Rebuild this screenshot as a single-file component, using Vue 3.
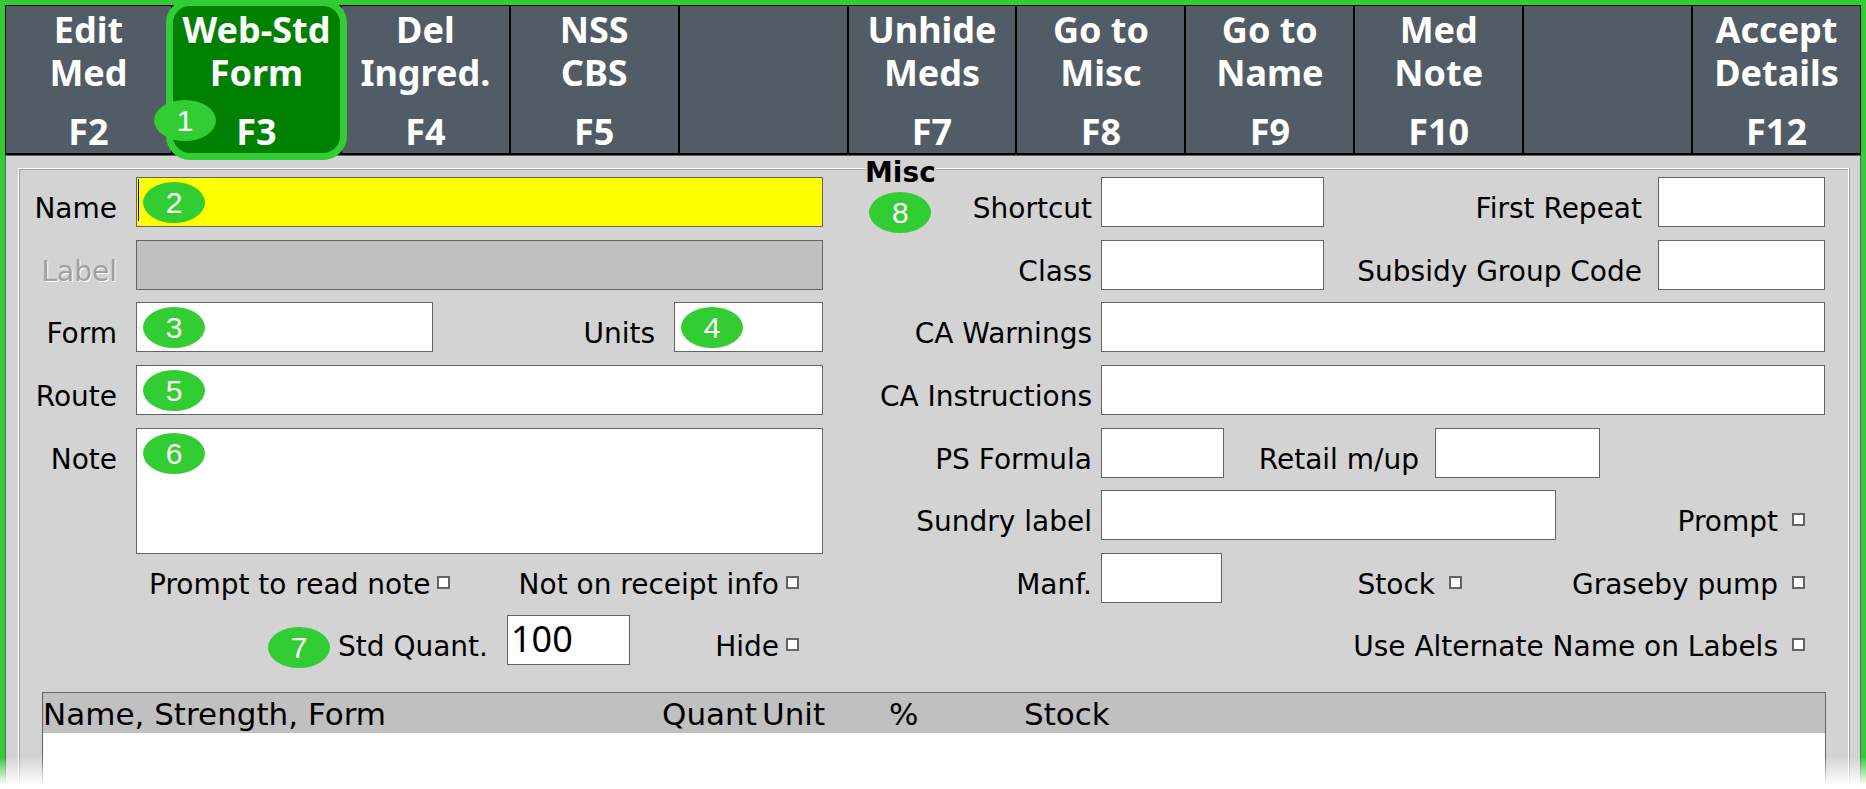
<template>
  <div class="screen">
    <nav class="toolbar">
      <button
        v-for="(item, index) in actions"
        :key="index"
        type="button"
        class="action"
        :class="{ active: item.active }"
        :aria-label="item.key ? null : 'Unassigned'"
      >
        <span class="action-text">
          <span v-for="line in item.lines" :key="line">{{ line }}</span>
        </span>
        <span>{{ item.key }}</span>
        <span v-if="item.active" class="badge action-badge">1</span>
      </button>
    </nav>

    <main class="body">
      <form class="group" @submit.prevent>
        <div class="grid">
          <!-- row 1 -->
          <label class="label" for="name">Name</label>
          <div class="field">
            <div class="box caret">
              <input id="name" v-model="form.name" class="input current" type="text" />
              <span class="badge over">2</span>
            </div>
          </div>
          <div class="misc-cell">
            <div class="misc">
              <span class="misc-title">Misc</span>
              <span class="badge">8</span>
            </div>
            <label class="label near" for="shortcut">Shortcut</label>
          </div>
          <div class="field pair">
            <input id="shortcut" v-model="form.shortcut" class="input" type="text" />
            <label class="label inner" for="repeat">First Repeat</label>
            <input id="repeat" v-model="form.repeat" class="input" type="text" />
          </div>

          <!-- row 2 -->
          <label class="label disabled" for="label">Label</label>
          <div class="field">
            <input id="label" class="input" type="text" disabled />
          </div>
          <label class="label near" for="class">Class</label>
          <div class="field pair">
            <input id="class" v-model="form.class" class="input" type="text" />
            <label class="label inner" for="subsidy">Subsidy Group Code</label>
            <input id="subsidy" v-model="form.subsidy" class="input" type="text" />
          </div>

          <!-- row 3 -->
          <label class="label" for="form">Form</label>
          <div class="field form-units">
            <div class="box">
              <input id="form" v-model="form.form" class="input" type="text" />
              <span class="badge over">3</span>
            </div>
            <label class="label" for="units">Units</label>
            <div class="box">
              <input id="units" v-model="form.units" class="input" type="text" />
              <span class="badge over">4</span>
            </div>
          </div>
          <label class="label near" for="warnings">CA Warnings</label>
          <div class="field">
            <input id="warnings" v-model="form.warnings" class="input" type="text" />
          </div>

          <!-- row 4 -->
          <label class="label" for="route">Route</label>
          <div class="field">
            <div class="box">
              <input id="route" v-model="form.route" class="input" type="text" />
              <span class="badge over">5</span>
            </div>
          </div>
          <label class="label near" for="instructions">CA Instructions</label>
          <div class="field">
            <input id="instructions" v-model="form.instructions" class="input" type="text" />
          </div>

          <!-- rows 5 and 6 -->
          <label class="label tall" for="note">Note</label>
          <div class="field tall">
            <div class="box note">
              <textarea id="note" v-model="form.note" class="input"></textarea>
              <span class="badge over">6</span>
            </div>
          </div>
          <label class="label near" for="formula">PS Formula</label>
          <div class="field formula">
            <input id="formula" v-model="form.formula" class="input" type="text" />
            <label class="label inner" for="markup">Retail m/up</label>
            <input id="markup" v-model="form.markup" class="input" type="text" />
          </div>
          <label class="label near" for="sundry">Sundry label</label>
          <div class="field sundry">
            <input id="sundry" v-model="form.sundry" class="input" type="text" />
            <label class="check wide edge">Prompt<input v-model="form.prompt" type="checkbox" /></label>
          </div>

          <!-- row 7 -->
          <div class="field checks">
            <label class="check">Prompt to read note<input v-model="form.readNote" type="checkbox" /></label>
            <label class="check">Not on receipt info<input v-model="form.noReceipt" type="checkbox" /></label>
          </div>
          <label class="label near" for="manf">Manf.</label>
          <div class="field manf">
            <input id="manf" v-model="form.manf" class="input" type="text" />
            <label class="check wide">Stock<input v-model="form.stock" type="checkbox" /></label>
            <label class="check wide edge">Graseby pump<input v-model="form.pump" type="checkbox" /></label>
          </div>

          <!-- row 8 -->
          <div class="field quant">
            <div class="quant-label">
              <span class="badge">7</span>
              <label class="label" for="quant">Std Quant.</label>
            </div>
            <input id="quant" v-model="form.quant" class="input" type="text" />
            <label class="check">Hide<input v-model="form.hide" type="checkbox" /></label>
          </div>
          <div class="field alternate">
            <label class="check wide edge">Use Alternate Name on Labels<input v-model="form.alternate" type="checkbox" /></label>
          </div>
        </div>

        <div class="list">
          <table>
            <thead>
              <tr>
                <th class="col-name">Name, Strength, Form</th>
                <th class="col-quant">Quant</th>
                <th class="col-unit">Unit</th>
                <th class="col-percent">%</th>
                <th>Stock</th>
              </tr>
            </thead>
          </table>
        </div>
      </form>
    </main>
    <div class="fade"></div>
  </div>
</template>

<script setup>
import { reactive } from 'vue'

const actions = [
  { lines: ['Edit', 'Med'], key: 'F2' },
  { lines: ['Web-Std', 'Form'], key: 'F3', active: true },
  { lines: ['Del', 'Ingred.'], key: 'F4' },
  { lines: ['NSS', 'CBS'], key: 'F5' },
  { lines: [], key: '' },
  { lines: ['Unhide', 'Meds'], key: 'F7' },
  { lines: ['Go to', 'Misc'], key: 'F8' },
  { lines: ['Go to', 'Name'], key: 'F9' },
  { lines: ['Med', 'Note'], key: 'F10' },
  { lines: [], key: '' },
  { lines: ['Accept', 'Details'], key: 'F12' }
]

const form = reactive({
  name: '',
  shortcut: '',
  repeat: '',
  class: '',
  subsidy: '',
  form: '',
  units: '',
  warnings: '',
  route: '',
  instructions: '',
  note: '',
  formula: '',
  markup: '',
  sundry: '',
  manf: '',
  quant: '100',
  prompt: false,
  readNote: false,
  noReceipt: false,
  stock: false,
  pump: false,
  hide: false,
  alternate: false
})
</script>

<style>
body {
  margin: 0;
}
</style>

<style scoped>
.screen,
.screen * {
  box-sizing: border-box;
}

.screen {
  position: relative;
  display: flex;
  flex-direction: column;
  min-height: 100vh;
  border: 5px solid #32cd32;
  border-bottom: none;
  background: #d3d3d3;
  color: #000;
  font-family: "DejaVu Sans", Verdana, sans-serif;
  font-size: 28px;
}

/* toolbar */
.toolbar {
  display: grid;
  grid-template-columns: 165px repeat(10, minmax(0, 1fr));
  gap: 2px;
  padding: 1px 1px 2px;
  background: #000;
}

.action {
  position: relative;
  display: flex;
  flex-direction: column;
  align-items: center;
  justify-content: space-between;
  height: 147px;
  padding: 2px 0 0;
  border: none;
  background: #525c66;
  color: #fff;
  font: bold 36px/43px "Noto Sans", Tahoma, sans-serif;
  white-space: nowrap;
  cursor: pointer;
}

.action-text {
  display: flex;
  flex-direction: column;
  align-items: center;
}

.action.active {
  z-index: 1;
  background: #008000;
}

.action.active::after {
  content: "";
  position: absolute;
  inset: -7px;
  border: 7px solid #32cd32;
  border-radius: 24px;
}

.badge {
  display: block;
  flex: none;
  width: 62px;
  height: 41px;
  border-radius: 50%;
  background: #32cd32;
  color: #fff;
  font: 30px/41px "Liberation Sans", Arial, sans-serif;
  text-align: center;
}

.action-badge {
  position: absolute;
  left: -19px;
  bottom: 12px;
  z-index: 1;
}

/* group box */
.body {
  display: flex;
  flex: 1;
  flex-direction: column;
  padding: 12px 11px 0 12px;
  border: 1px solid #646464;
  border-bottom: none;
}

.group {
  display: flex;
  flex: 1;
  flex-direction: column;
  padding-top: 8px;
  border: 1px solid #fff;
  border-bottom: none;
  box-shadow: inset 1px 1px #a0a0a0, 1px 0 #a0a0a0;
}

.grid {
  display: grid;
  grid-template-columns: 117px minmax(0, 687fr) 278px minmax(0, 724fr);
  grid-template-rows: repeat(8, minmax(0, 1fr));
  height: 501px;
  padding-right: 23px;
}

.label,
.check {
  line-height: 64px;
  white-space: nowrap;
}

.label {
  padding-right: 19px;
  text-align: right;
}

.label.near {
  padding-right: 9px;
}

.label.inner {
  padding-right: 16px;
}

.label.disabled {
  color: #a0a0a0;
  text-shadow: 1px 1px #fff;
}

.tall {
  grid-row: 5 / span 2;
}

.label.tall {
  grid-column: 1;
}

.field.tall {
  grid-column: 2;
}

.field {
  display: grid;
  align-items: start;
}

.box {
  position: relative;
  display: grid;
}

.input {
  display: block;
  width: 100%;
  min-width: 0;
  height: 50px;
  margin: 0;
  padding: 0 3px 4px;
  border: 1px solid #646464;
  border-radius: 0;
  outline: none;
  background: #fff;
  color: #000;
  font: 36px "Noto Sans", Tahoma, sans-serif;
  resize: none;
}

.input.current {
  background: #ff0;
}

.input:disabled {
  background: #c0c0c0;
}

.note .input {
  height: 126px;
}

.caret::after {
  content: "";
  position: absolute;
  top: 2px;
  left: 2px;
  width: 1px;
  height: 42px;
  background: #00f;
}

.over {
  position: absolute;
  top: 5px;
  left: 7px;
}

.misc-cell {
  position: relative;
  display: grid;
}

.misc {
  position: absolute;
  top: -20px;
  left: 42px;
  display: flex;
  flex-direction: column;
  align-items: center;
  gap: 3px;
}

.misc-title {
  background: #d3d3d3;
  font-weight: bold;
  line-height: 32px;
}

.pair {
  grid-template-columns: 223fr 334px 167fr;
}

.form-units {
  grid-template-columns: 297fr 241px 149fr;
}

.formula {
  grid-template-columns: 123fr 211px 165fr 225fr;
}

.sundry {
  grid-template-columns: 455fr 269fr;
}

.manf {
  grid-template-columns: 121fr 240fr 363fr;
}

.checks,
.quant {
  grid-column: 1 / span 2;
  padding-right: 24px;
}

.checks {
  grid-template-columns: auto auto;
  justify-content: space-between;
  padding-left: 130px;
}

.quant {
  grid-template-columns: 488px 123px 1fr;
}

.quant-label {
  display: flex;
  align-items: center;
  justify-content: flex-end;
  gap: 8px;
}

.alternate {
  grid-column: 4;
}

.check {
  display: flex;
  align-items: flex-start;
  justify-content: flex-end;
  gap: 7px;
}

.check.wide {
  gap: 14px;
}

.check.edge {
  padding-right: 20px;
}

.check input {
  flex: none;
  width: 13px;
  height: 13px;
  margin: 23px 0 0;
  border: 2px solid #646464;
  background: #fff;
  appearance: none;
}

.check input:checked {
  background: #000;
}

/* ingredient list */
.list {
  flex: 1;
  min-height: 97px;
  margin: 14px 22px 0 23px;
  border: 1px solid #646464;
  border-bottom: none;
  background: #fff;
}

table {
  width: 100%;
  border-collapse: collapse;
  table-layout: fixed;
  background: #c0c0c0;
  font-size: 31px;
}

th {
  padding: 3px 0 0;
  font-weight: normal;
  line-height: 37px;
  text-align: left;
  white-space: nowrap;
}

.col-name {
  width: 619px;
}

.col-quant {
  width: 100px;
}

.col-unit {
  width: 127px;
}

.col-percent {
  width: 135px;
}

.fade {
  position: absolute;
  right: -5px;
  bottom: 0;
  left: -5px;
  height: 32px;
  background: linear-gradient(rgba(255, 255, 255, 0), #fff 28px);
  pointer-events: none;
}
</style>
